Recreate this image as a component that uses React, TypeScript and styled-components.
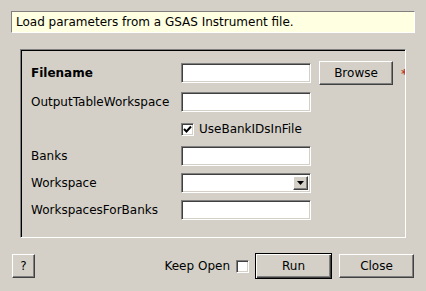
import React from 'react';
import styled, { createGlobalStyle } from 'styled-components';

const GlobalStyle = createGlobalStyle`
  html, body {
    margin: 0;
    padding: 0;
    background: #d4d0c8;
  }
  body {
    font-family: "DejaVu Sans", "Liberation Sans", sans-serif;
    font-size: 12px;
    color: #000;
  }
`;

const Page = styled.div`
  width: 426px;
  height: 291px;
  box-sizing: border-box;
  padding-top: 11px;
  display: flex;
  flex-direction: column;
  background: #d4d0c8;
`;

const InfoBox = styled.div`
  margin: 0 11px;
  height: 22px;
  box-sizing: border-box;
  padding-left: 4px;
  line-height: 20px;
  background: #ffffe1;
  border: 1px solid;
  border-color: #808080 #ffffff #ffffff #808080;
  white-space: nowrap;
`;

const Panel = styled.div`
  margin: 16px 0 0 20px;
  width: 386px;
  height: 189px;
  box-sizing: border-box;
  border: 1px solid;
  border-color: #808080 #ffffff #ffffff #808080;
  box-shadow: inset 1px 1px 0 #000, inset -1px -1px 0 #d4d0c8;
  padding: 11px 0 0 10px;
  display: flex;
  flex-direction: column;
  gap: 7px;
  overflow: hidden;
`;

const Row = styled.div<{ $h?: number; $indent?: number }>`
  display: flex;
  align-items: center;
  height: ${(p) => p.$h ?? 20}px;
  padding-left: ${(p) => p.$indent ?? 0}px;
  flex-shrink: 0;
`;

const Label = styled.div<{ $bold?: boolean }>`
  width: 150px;
  flex-shrink: 0;
  font-weight: ${(p) => (p.$bold ? 'bold' : 'normal')};
  white-space: nowrap;
`;

const Field = styled.div`
  position: relative;
  width: 130px;
  height: 20px;
  box-sizing: border-box;
  background: #fff;
  border: 1px solid;
  border-color: #808080 #ffffff #ffffff #808080;
  box-shadow: inset 1px 1px 0 #404040, inset -1px -1px 0 #d4d0c8;
  flex-shrink: 0;
`;

const ComboButton = styled.div`
  position: absolute;
  top: 2px;
  right: 2px;
  width: 15px;
  height: 14px;
  box-sizing: border-box;
  background: #d4d0c8;
  border: 1px solid;
  border-color: #ffffff #404040 #404040 #ffffff;
  box-shadow: inset -1px -1px 0 #808080;
  display: flex;
  align-items: center;
  justify-content: center;
`;

const Button = styled.button<{ $w: number; $h?: number; $default?: boolean }>`
  width: ${(p) => p.$w}px;
  height: ${(p) => p.$h ?? 24}px;
  box-sizing: border-box;
  padding: 0;
  font-family: "DejaVu Sans", "Liberation Sans", sans-serif;
  font-size: 12px;
  color: #000;
  background: #d4d0c8;
  border: 1px solid;
  border-color: ${(p) => (p.$default ? '#000' : '#ffffff #404040 #404040 #ffffff')};
  box-shadow: ${(p) =>
    p.$default
      ? 'inset 1px 1px 0 #ffffff, inset -1px -1px 0 #404040, inset -2px -2px 0 #808080'
      : 'inset -1px -1px 0 #808080'};
  flex-shrink: 0;
`;

const Required = styled.span`
  margin-left: 8px;
  color: #c0392b;
  font-weight: bold;
  font-size: 13px;
`;

const CheckBox = styled.div`
  width: 13px;
  height: 13px;
  box-sizing: border-box;
  background: #fff;
  border: 1px solid;
  border-color: #808080 #ffffff #ffffff #808080;
  box-shadow: inset 1px 1px 0 #404040, inset -1px -1px 0 #d4d0c8;
  display: flex;
  align-items: center;
  justify-content: center;
  flex-shrink: 0;
`;

const CheckText = styled.span`
  margin-left: 5px;
  white-space: nowrap;
`;

const BottomBar = styled.div`
  margin: 15px 12px 0 12px;
  height: 26px;
  display: flex;
  align-items: center;
`;

const Spacer = styled.div`
  flex: 1;
`;

const KeepOpen = styled.span`
  white-space: nowrap;
  margin-right: 6px;
`;

const Gap = styled.div<{ $w: number }>`
  width: ${(p) => p.$w}px;
  flex-shrink: 0;
`;

const Check = () => (
  <svg width="9" height="9" viewBox="0 0 9 9">
    <path d="M1 4 L3.5 6.5 L8 1.5" stroke="#000" strokeWidth="2" fill="none" />
  </svg>
);

const Arrow = () => (
  <svg width="7" height="4" viewBox="0 0 7 4">
    <path d="M0 0 H7 L3.5 4 Z" fill="#000" />
  </svg>
);

export default function App() {
  return (
    <>
      <GlobalStyle />
      <Page>
        <InfoBox>Load parameters from a GSAS Instrument file.</InfoBox>
        <Panel>
          <Row $h={24}>
            <Label $bold>Filename</Label>
            <Field />
            <Gap $w={8} />
            <Button $w={74}>Browse</Button>
            <Required>*</Required>
          </Row>
          <Row>
            <Label>OutputTableWorkspace</Label>
            <Field />
          </Row>
          <Row $indent={150}>
            <CheckBox>
              <Check />
            </CheckBox>
            <CheckText>UseBankIDsInFile</CheckText>
          </Row>
          <Row>
            <Label>Banks</Label>
            <Field />
          </Row>
          <Row>
            <Label>Workspace</Label>
            <Field>
              <ComboButton>
                <Arrow />
              </ComboButton>
            </Field>
          </Row>
          <Row>
            <Label>WorkspacesForBanks</Label>
            <Field />
          </Row>
        </Panel>
        <BottomBar>
          <Button $w={23}>?</Button>
          <Spacer />
          <KeepOpen>Keep Open</KeepOpen>
          <CheckBox />
          <Gap $w={6} />
          <Button $w={77} $h={26} $default>
            Run
          </Button>
          <Gap $w={7} />
          <Button $w={75}>Close</Button>
        </BottomBar>
      </Page>
    </>
  );
}
